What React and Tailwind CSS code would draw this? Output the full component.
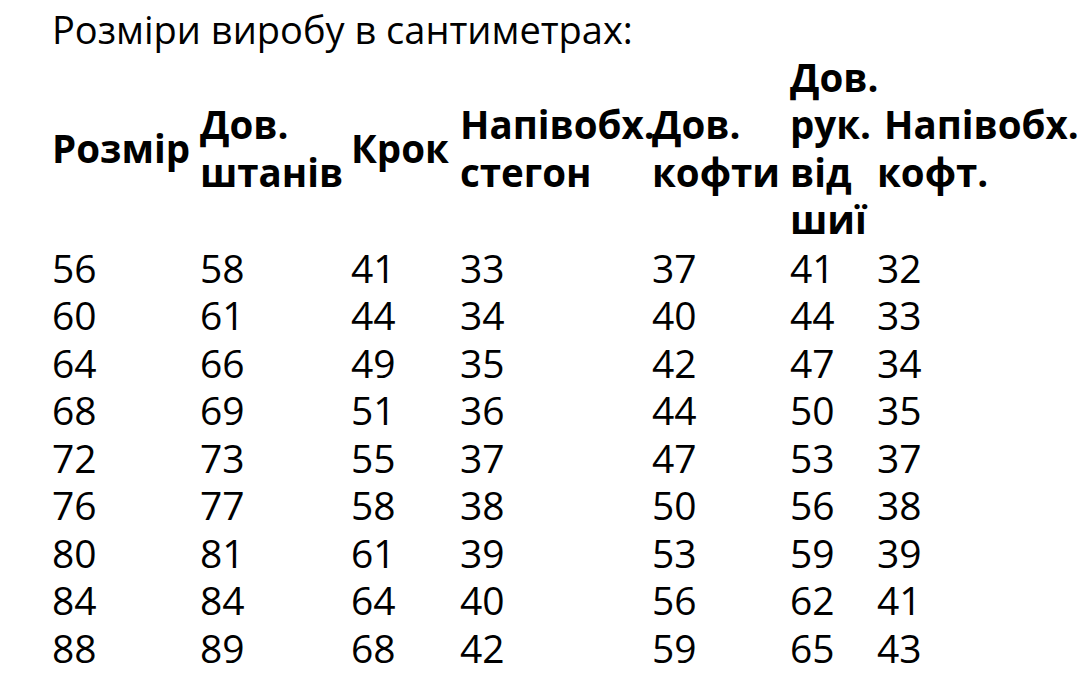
const HEADERS = [
  ["Розмір"],
  ["Дов.", "штанів"],
  ["Крок"],
  ["Напівобх.", "стегон"],
  ["Дов.", "кофти"],
  ["Дов.", "рук.", "від", "шиї"],
  ["Напівобх.", "кофт."],
];

const ROWS = [
  [56, 58, 41, 33, 37, 41, 32],
  [60, 61, 44, 34, 40, 44, 33],
  [64, 66, 49, 35, 42, 47, 34],
  [68, 69, 51, 36, 44, 50, 35],
  [72, 73, 55, 37, 47, 53, 37],
  [76, 77, 58, 38, 50, 56, 38],
  [80, 81, 61, 39, 53, 59, 39],
  [84, 84, 64, 40, 56, 62, 41],
  [88, 89, 68, 42, 59, 65, 43],
];

const GRID = "grid grid-cols-[148px_151px_109px_192px_138px_87px_1fr]";

export default function App() {
  return (
    <div
      className="min-h-[687px] w-[1080px] overflow-hidden bg-white pl-[52px] pt-[6px] text-[39px] leading-[47.5px] text-black"
      style={{ fontFamily: '"Open Sans", "Noto Sans", sans-serif' }}
    >
      <h1 className="text-[38px] font-normal">Розміри виробу в сантиметрах:</h1>

      <div className={`${GRID} text-[38.5px] font-bold`}>
        {HEADERS.map((lines, i) => (
          <div key={i} className="flex h-[190px] flex-col justify-center whitespace-nowrap">
            {lines.map((l, j) => (
              <span key={l} className={i === 6 && j === 0 ? "ml-[7px]" : undefined}>
                {l}
              </span>
            ))}
          </div>
        ))}
      </div>

      {ROWS.map((row) => (
        <div key={row[0]} className={GRID}>
          {row.map((v, i) => (
            <span key={i}>{v}</span>
          ))}
        </div>
      ))}
    </div>
  );
}
